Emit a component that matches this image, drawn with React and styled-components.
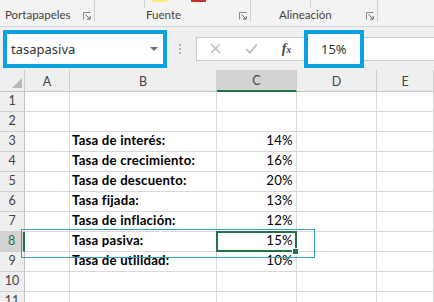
import React from "react";
import styled, { createGlobalStyle } from "styled-components";

const GlobalStyle = createGlobalStyle`
  html, body {
    margin: 0;
    padding: 0;
    background: #ffffff;
  }
  body {
    width: 434px;
    height: 302px;
    overflow: hidden;
    font-family: Lato, "Liberation Sans", sans-serif;
  }
`;

const BLUE = "#0aa2e4";
const GREEN = "#217346";

const rows = [
  { n: 1 },
  { n: 2 },
  { n: 3, label: "Tasa de interés:", value: "14%" },
  { n: 4, label: "Tasa de crecimiento:", value: "16%" },
  { n: 5, label: "Tasa de descuento:", value: "20%" },
  { n: 6, label: "Tasa fijada:", value: "13%" },
  { n: 7, label: "Tasa de inflación:", value: "12%" },
  { n: 8, label: "Tasa pasiva:", value: "15%", selected: true },
  { n: 9, label: "Tasa de utilidad:", value: "10%" },
  { n: 10 },
  { n: 11 },
];

const columns = ["A", "B", "C", "D", "E"];

// ---------- ribbon ----------
const Ribbon = styled.div`
  display: flex;
  align-items: flex-start;
  height: 26px;
  background: #f3f3f3;
  border-bottom: 1px solid #d5d5d5;
`;

const Group = styled.div`
  width: ${(p) => p.w}px;
  height: 22px;
  box-sizing: border-box;
  display: flex;
  flex-direction: column;
  justify-content: space-between;
  border-right: 1px solid #cfcfcf;
`;

const TopStrip = styled.div`
  display: flex;
  align-items: flex-start;
  height: 8px;
`;

const SubLine = styled.div`
  width: 1px;
  height: 8px;
  background: #d2d2d2;
  margin-left: ${(p) => p.at}px;
`;

const Swatch = styled.div`
  width: 15px;
  height: 2px;
  background: ${(p) => p.color};
  margin-left: ${(p) => p.at}px;
`;

const GroupFoot = styled.div`
  display: flex;
  align-items: center;
  padding-left: ${(p) => p.pad}px;
  padding-right: 3px;
  height: 14px;
`;

const GroupLabel = styled.span`
  font-family: Lato, "Noto Sans", sans-serif;
  font-size: 11.5px;
  color: #444444;
  line-height: 14px;
  white-space: nowrap;
`;

const Launcher = styled.svg`
  margin-left: auto;
  flex-shrink: 0;
  width: 8px;
  height: 8px;
  margin-top: 2px;
`;

function LauncherIcon() {
  return (
    <Launcher viewBox="0 0 8 8">
      <path d="M0.5 7.5V0.5H7.5" fill="none" stroke="#8a8a8a" strokeWidth="1" />
      <path d="M2.5 2.5L7 7M4 7.2H7.2V4" fill="none" stroke="#6a6a6a" strokeWidth="1" />
    </Launcher>
  );
}

// ---------- formula bar ----------
const Strip = styled.div`
  display: flex;
  align-items: center;
  height: 43px;
  background: #efefef;
  padding-left: 3px;
`;

const Highlight = styled.div`
  box-sizing: border-box;
  height: 38px;
  width: ${(p) => p.w}px;
  border: 4px solid ${BLUE};
  background: #ffffff;
  display: flex;
  align-items: center;
  flex-shrink: 0;
  padding-left: ${(p) => p.pad}px;
  padding-right: 5px;
  font-family: "Noto Sans", "Open Sans", sans-serif;
  font-size: 13px;
  color: #333333;
`;

const DropArrow = styled.span`
  margin-left: auto;
  width: 0;
  height: 0;
  border-left: 4px solid transparent;
  border-right: 4px solid transparent;
  border-top: 4px solid #707070;
`;

const Dots = styled.div`
  display: flex;
  flex-direction: column;
  gap: 2px;
  margin-left: 12px;
  margin-right: 15px;

  span {
    width: 2px;
    height: 2px;
    background: #b2b2b2;
  }
`;

const FormulaBox = styled.div`
  flex: 1;
  height: 24px;
  box-sizing: border-box;
  display: flex;
  align-items: center;
  background: #ffffff;
  border: 1px solid #c9c9c9;
  border-right: none;
`;

const IconSlot = styled.div`
  width: ${(p) => p.w}px;
  display: flex;
  justify-content: center;
  align-items: center;
  color: #b7b7b7;
`;

const Fx = styled.span`
  font-family: "Liberation Serif", serif;
  font-style: italic;
  font-weight: 700;
  font-size: 14px;
  color: #4a4a4a;

  small {
    font-size: 10px;
  }
`;

// ---------- grid ----------
const Sheet = styled.div`
  position: relative;
  display: grid;
  grid-template-columns: 25px 45px 147px 80px 80px 1fr;
  grid-template-rows: 22px repeat(11, 20px);
`;

const Corner = styled.div`
  box-sizing: border-box;
  background: #efefef;
  border-right: 1px solid #cccccc;
  border-bottom: 1px solid #c4c4c4;
  display: flex;
  justify-content: flex-end;
  align-items: flex-end;
  padding: 0 2px 3px 0;
`;

const ColHead = styled.div`
  box-sizing: border-box;
  background: ${(p) => (p.active ? "#d3d3d3" : "#efefef")};
  border-right: 1px solid #d0d0d0;
  border-bottom: ${(p) => (p.active ? `2px solid ${GREEN}` : "1px solid #c4c4c4")};
  display: flex;
  justify-content: center;
  align-items: center;
  padding-top: 1px;
  font-size: 12.5px;
  color: #444444;
`;

const RowHead = styled.div`
  box-sizing: border-box;
  background: ${(p) => (p.active ? "#d3d3d3" : "#efefef")};
  border-right: ${(p) => (p.active ? `2px solid ${GREEN}` : "1px solid #c4c4c4")};
  border-bottom: 1px solid #d0d0d0;
  display: flex;
  justify-content: center;
  align-items: flex-end;
  padding-bottom: 3px;
  font-size: 12.5px;
  color: ${(p) => (p.active ? GREEN : "#444444")};
`;

const Cell = styled.div`
  position: relative;
  box-sizing: border-box;
  border-right: 1px solid #d9d9d9;
  border-bottom: 1px solid #d9d9d9;
  display: flex;
  align-items: flex-end;
  justify-content: ${(p) => (p.right ? "flex-end" : "flex-start")};
  padding: 0 3px 3px 2px;
  font-size: 13.2px;
  letter-spacing: ${(p) => (p.bold ? "0.2px" : "0.3px")};
  font-weight: ${(p) => (p.bold ? 700 : 400)};
  color: #000000;
  white-space: nowrap;

  ${(p) =>
    p.selected &&
    `
    &::after {
      content: "";
      position: absolute;
      left: -1px;
      top: -1px;
      right: -1px;
      bottom: -1px;
      border: 2px solid ${GREEN};
    }
    &::before {
      content: "";
      position: absolute;
      right: -3px;
      bottom: -4px;
      width: 5px;
      height: 5px;
      background: ${GREEN};
      border: 1px solid #ffffff;
      z-index: 2;
    }
  `}
`;

const Callout = styled.div`
  position: absolute;
  left: 21px;
  top: 159px;
  width: 294px;
  height: 29px;
  box-sizing: border-box;
  border: 1px solid #34a0c6;
  pointer-events: none;
`;

export default function App() {
  return (
    <>
      <GlobalStyle />
      <Ribbon>
        <Group w={95}>
          <TopStrip />
          <GroupFoot pad={5}>
            <GroupLabel>Portapapeles</GroupLabel>
            <LauncherIcon />
          </GroupFoot>
        </Group>
        <Group w={156}>
          <TopStrip>
            <SubLine at={49} />
            <Swatch at={7} color="#f7ef78" />
            <Swatch at={24} color="#c8312b" />
          </TopStrip>
          <GroupFoot pad={51}>
            <GroupLabel>Fuente</GroupLabel>
            <LauncherIcon />
          </GroupFoot>
        </Group>
        <Group w={127}>
          <TopStrip>
            <SubLine at={59} />
          </TopStrip>
          <GroupFoot pad={28}>
            <GroupLabel>Alineación</GroupLabel>
            <LauncherIcon />
          </GroupFoot>
        </Group>
      </Ribbon>

      <Strip>
        <Highlight w={164} pad={4}>
          tasapasiva
          <DropArrow />
        </Highlight>
        <Dots>
          <span />
          <span />
          <span />
        </Dots>
        <FormulaBox>
          <IconSlot w={36}>
            <svg width="11" height="11" viewBox="0 0 11 11">
              <path d="M1 1L10 10M10 1L1 10" stroke="currentColor" strokeWidth="1.3" />
            </svg>
          </IconSlot>
          <IconSlot w={36}>
            <svg width="13" height="11" viewBox="0 0 13 11">
              <path d="M1 6L4.8 9.6L12 1.5" fill="none" stroke="currentColor" strokeWidth="1.6" />
            </svg>
          </IconSlot>
          <IconSlot w={35}>
            <Fx>
              f<small>x</small>
            </Fx>
          </IconSlot>
          <Highlight w={60} pad={13}>
            15%
          </Highlight>
        </FormulaBox>
      </Strip>

      <Sheet>
        <Corner>
          <svg width="10" height="10" viewBox="0 0 10 10">
            <path d="M10 0V10H0Z" fill="#b9b9b9" />
          </svg>
        </Corner>
        {columns.map((c) => (
          <ColHead key={c} active={c === "C"}>
            {c}
          </ColHead>
        ))}
        {rows.map((r) => (
          <React.Fragment key={r.n}>
            <RowHead active={r.selected}>{r.n}</RowHead>
            <Cell />
            <Cell bold>{r.label}</Cell>
            <Cell right selected={r.selected}>
              {r.value}
            </Cell>
            <Cell />
            <Cell />
          </React.Fragment>
        ))}
        <Callout />
      </Sheet>
    </>
  );
}
